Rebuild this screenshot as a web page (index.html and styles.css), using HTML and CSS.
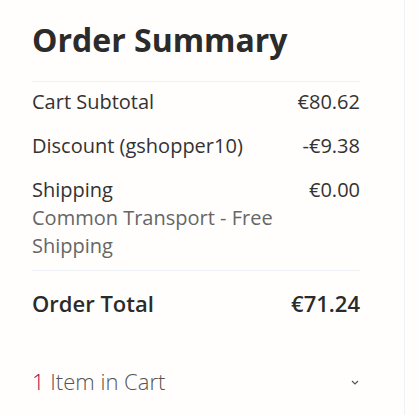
FILE: index.html
```html
<!DOCTYPE html>
<html>
<head>
<meta charset="utf-8">
<link rel="stylesheet" href="styles.css">
</head>
<body>
<div class="page">
  <aside class="summary">
    <h1 class="title">Order Summary</h1>
    <div class="rows">
      <div class="row">
        <span class="label">Cart Subtotal</span>
        <span class="amount">€80.62</span>
      </div>
      <div class="row">
        <span class="label">Discount (gshopper10)</span>
        <span class="amount">-€9.38</span>
      </div>
      <div class="row last">
        <div class="label">
          <div>Shipping</div>
          <div class="sub">Common Transport - Free Shipping</div>
        </div>
        <span class="amount">€0.00</span>
      </div>
    </div>
    <div class="row total">
      <span class="label">Order Total</span>
      <span class="amount">€71.24</span>
    </div>
    <div class="cart">
      <span class="cart-text"><span class="count">1</span> Item in Cart</span>
      <svg class="chev" width="8" height="5" viewBox="0 0 8 5"><path d="M1 1l3 3 3-3" fill="none" stroke="#555" stroke-width="1.2"/></svg>
    </div>
  </aside>
  <div class="side"></div>
</div>
</body>
</html>
```
FILE: styles.css
```css
html, body {
  margin: 0;
  padding: 0;
  background: #fffefc;
}
.page {
  display: flex;
  height: 415px;
}
.summary {
  width: 328px;
  padding: 0 44px 0 32px;
  border-right: 1px solid #eef3f8;
  font-family: "Open Sans", sans-serif;
  color: #333;
}
.side {
  flex: 1;
  background: #fffefc;
}
.title {
  margin: 0;
  padding-top: 17px;
  font-size: 32px;
  line-height: 46px;
  font-weight: 700;
  color: #2b2b2b;
  padding-bottom: 18px;
  border-bottom: 1px solid #f1f1f1;
}
.rows {
  padding-top: 6px;
  border-bottom: 1px solid #eef1f6;
}
.row {
  display: flex;
  justify-content: space-between;
  align-items: flex-start;
  font-size: 20px;
  line-height: 28px;
  padding: 0 0 16px;
}
.row.last {
  padding-bottom: 10px;
}
.row .label {
  max-width: 250px;
}
.sub {
  color: #666;
}
.total {
  padding-top: 17px;
  padding-bottom: 0;
  font-size: 22px;
  font-weight: 600;
  line-height: 30px;
  color: #2b2b2b;
}
.cart {
  display: flex;
  justify-content: space-between;
  align-items: center;
  padding-top: 48px;
  font-size: 22px;
  line-height: 30px;
  font-weight: 300;
  color: #555;
}
.count {
  color: #a0113d;
}
.chev {
  margin-right: 1px;
  margin-top: 2px;
}
```
